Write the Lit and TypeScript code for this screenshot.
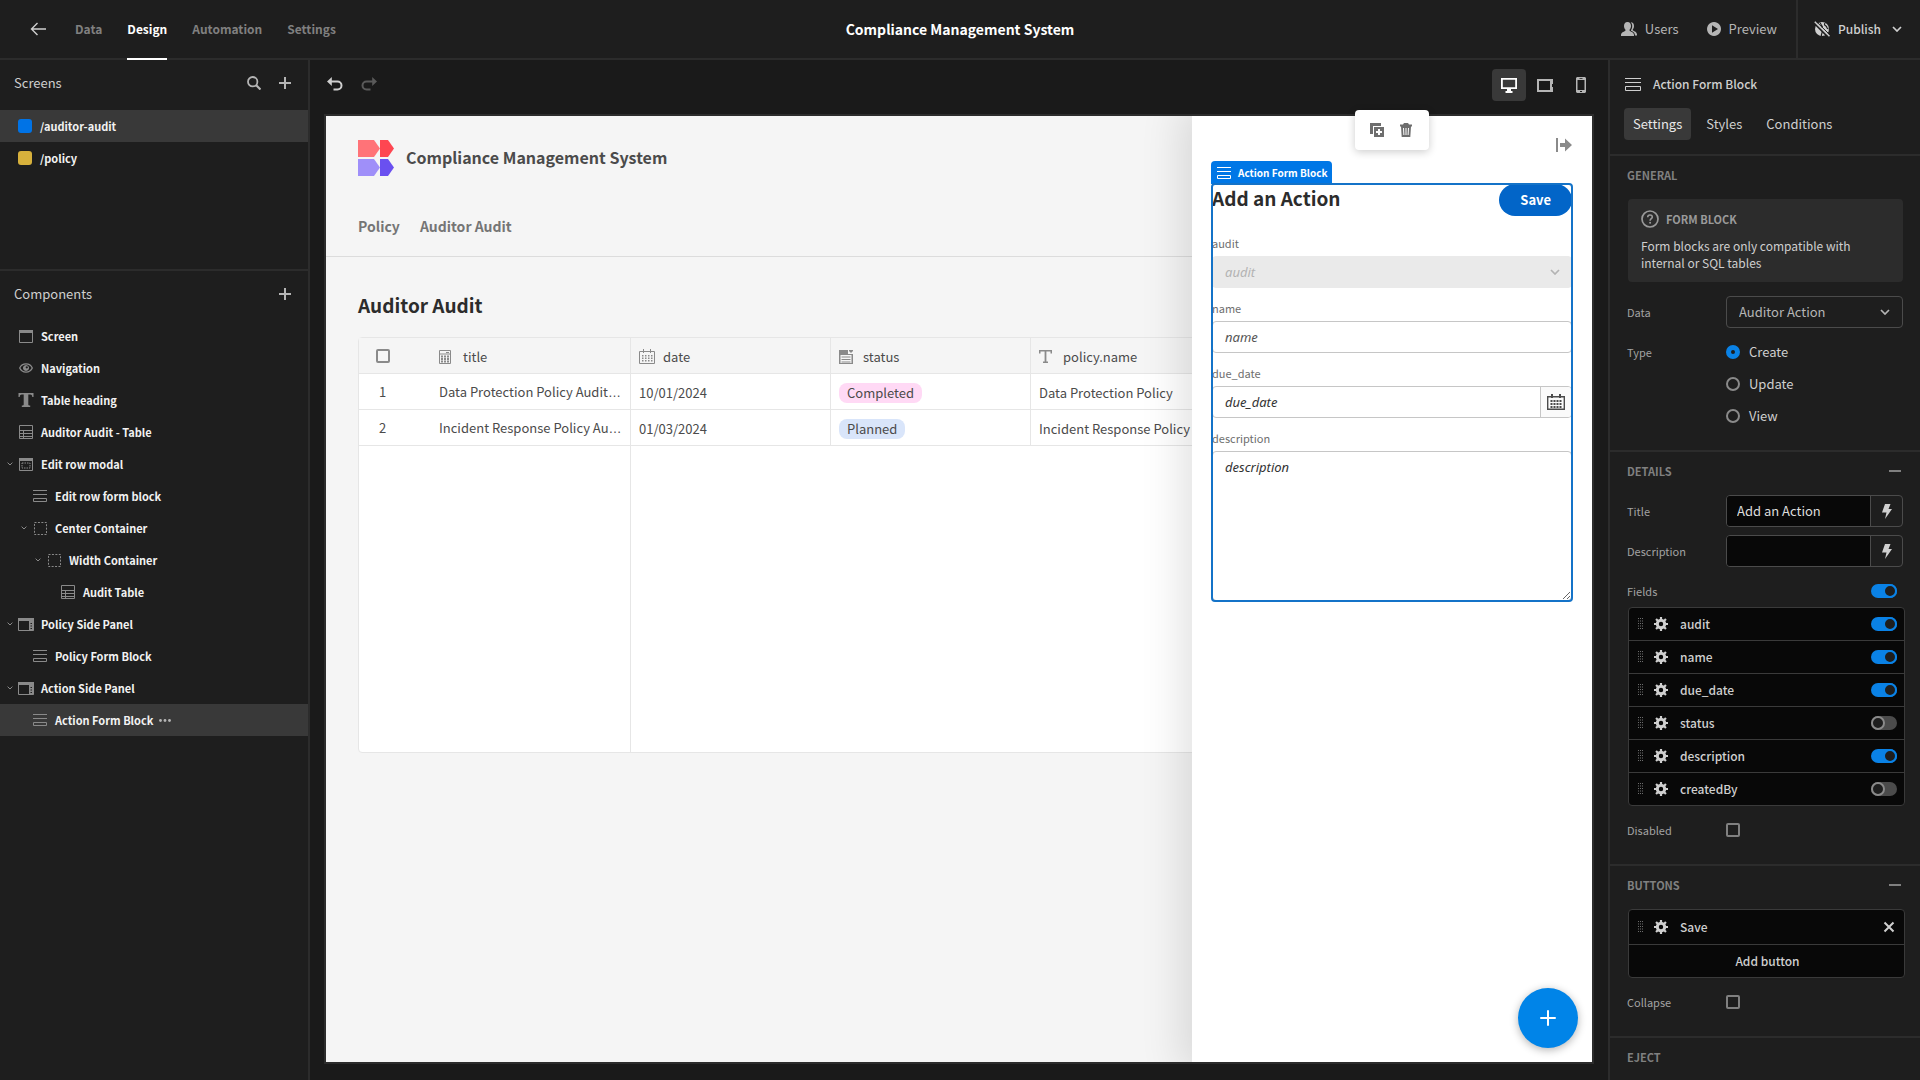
import { LitElement, html, svg, css, nothing } from "lit";
import { customElement } from "lit/decorators.js";
import { classMap } from "lit/directives/class-map.js";

const line = (d: string, w: number | string = 1) =>
  svg`<path d=${d} fill="none" stroke="currentColor" stroke-width=${w}></path>`;
const fill = (d: string) => svg`<path d=${d} fill="currentColor" fill-rule="evenodd"></path>`;

const dots = (cols: number[], rows: number[], s: number) =>
  cols.map((x) => rows.map((y) => svg`<rect x=${x} y=${y} width=${s} height=${s} fill="currentColor"></rect>`));

const ICONS: Record<string, [number, number, unknown]> = {
  back: [16, 14, line("M16 7H1.5M7.5 1L1.5 7l6 6", 1.4)],
  search: [14, 14, svg`<circle cx="5.7" cy="5.7" r="4.7" fill="none" stroke="currentColor" stroke-width="1.8"></circle>${line("M9 9l4.5 4.5", 2.2)}`],
  plus: [12, 12, line("M6 0v12M0 6h12", 2)],
  minus: [12, 2, line("M0 1h12", 2)],
  cross: [12, 12, line("M1.5 1.5l9 9M10.5 1.5l-9 9", 2)],
  chevron: [10, 6, line("M1 1l4 4 4-4", 1.7)],
  chevronSmall: [6, 4, line("M0.6 0.6L3 3l2.400-2.400", 1)],
  undo: [16, 14, svg`${line("M4 4.500h6.500a4 4 0 0 1 0 8H6.500", 2)}${fill("M0 4.500L4.800 0v9z")}`],
  redo: [16, 14, svg`${line("M12 4.500H5.500a4 4 0 0 0 0 8h4", 2)}${fill("M16 4.500L11.200 0v9z")}`],
  screen: [14, 13, svg`${line("M.5 .5h13v12h-13z")}${fill("M0 0h14v3H0z")}`],
  eye: [14, 10, svg`${line("M.7 5C3.200-.4 10.800-.4 13.300 5C10.800 10.400 3.200 10.400 .7 5z", 1.3)}${fill("M7 2a3 3 0 1 0 .01 0zM7.800 3.200a1.100 1.100 0 1 1-.01 0z")}`],
  text: [16, 14, fill("M.5 0h15v4h-1.200c-.2-1.600-.8-2.400-2.200-2.400H10.300v9.800c0 .8.500 1 1.900 1.100V14H3.800v-1.500c1.400-.1 1.900-.3 1.900-1.100V1.600H3.900C2.500 1.600 1.900 2.400 1.700 4H.5z")],
  table: [14, 14, line("M.5 .5h13v13H.5zM0 5.500h14M0 8.500h14M0 11.500h14M4.500 5.500V14")],
  modal: [14, 13, svg`${line("M.5 .5h13v12h-13z")}${fill("M0 0h14v3H0z")}<rect x="3" y="5" width="8" height="5" fill="none" stroke="currentColor" stroke-dasharray="1.500 1"></rect>`],
  form: [14, 12, line("M0 .5h14M0 4.500h14M.5 8.500h13v3H.5z")],
  formLarge: [16, 13, line("M0 .5h16M0 4.500h16M.5 8.500h15v4H.5z", 1)],
  box: [13, 13, svg`<rect x=".5" y=".5" width="12" height="12" fill="none" stroke="currentColor" stroke-dasharray="2 1.430"></rect>`],
  panel: [16, 13, svg`${line("M.5 .5h15v12H.5z")}${fill("M0 0h16v3H0zM11 3h4.500v9.500H11zM12.500 5v1H14V5zM12.500 7.500v1H14v-1zM12.500 10v1H14v-1z")}`],
  more: [12, 3, svg`<circle cx="1.500" cy="1.500" r="1.400" fill="currentColor"></circle><circle cx="6" cy="1.500" r="1.400" fill="currentColor"></circle><circle cx="10.500" cy="1.500" r="1.400" fill="currentColor"></circle>`],
  users: [16, 14, svg`${fill("M6.500 0C9 0 10 1.800 10 4c0 1.600-.6 2.800-1.400 3.600v1.200C9 9.500 13 10.200 13 13v1H0v-1c0-2.800 4-3.500 4.400-4.200V7.600C3.600 6.800 3 5.600 3 4c0-2.200 1-4 3.500-4z")}${fill("M9.700 .3C12 .3 13 1.900 13 4c0 1.500-.5 2.600-1.200 3.300v1C12.200 9 16 9.800 16 12.500v1h-2c-.1-2.600-1.700-3.700-4-4.700v-.8c.8-1 1.200-2.300 1.200-4 0-1.500-.5-2.800-1.500-3.700z")}`],
  play: [14, 14, fill("M7 0a7 7 0 1 0 .01 0zM5 3.300L11 7l-6 3.700z")],
  globe: [16, 16, svg`<circle cx="8" cy="8" r="7" fill="currentColor"></circle>
    <path d="M5.500 1.500c2 1 1 2.500 2.500 3.500s-2 2-1 3.500 2 1 1 3.500-.5 1.500-.5 3M11 2c-1 1.500-.5 2 1 3s0 2.500 2.500 3" fill="none" stroke="#1e1e1e" stroke-width="1.200"></path>
    <path d="M0 2L14 16" stroke="#1e1e1e" stroke-width="1.800"></path><path d="M.8 .8L15.500 15.300" stroke="currentColor" stroke-width="1.600"></path>
    <path d="M2 .2L16 14" stroke="#1e1e1e" stroke-width="1"></path>`],
  monitor: [16, 15, fill("M0 0h16v11h-6v2h1.500v2h-7v-2H6v-2H0zM1.800 1.800v7.400h12.400V1.800z")],
  tablet: [16, 13, fill("M0 0h16v5h-1v3h1v5H0zM2 2v9h11V2z")],
  phone: [10, 16, fill("M1 0h8l1 1v14l-1 1H1l-1-1V1zM1.500 3v10h7V3zM3.500 1v.8h3V1zM4 14v1h2v-1z")],
  duplicate: [14, 14, svg`${fill("M0 0h11v3H3v8H0z")}${fill("M4 4h10v10H4zM8 6v2H6v2h2v2h2v-2h2V8h-2V6z")}`],
  trash: [12, 14, fill("M4 0h4l1 1.500h3v2h-1L10.300 14H1.700L1 3.500H0v-2h3zM3 5l.4 7h1L4 5zM5.500 5v7h1V5zM8 5l-.4 7h1L9 5z")],
  dismiss: [16, 14, fill("M0 0h2v14H0zM4 5h5V.5L16 7l-7 6.500V9H4z")],
  number: [12, 14, svg`${line("M.5 .5h11v13H.5zM.5 4h11", 1)}${dots([2, 5, 8], [5.500, 8, 10.500], 2)}${fill("M7 2h3v1H7z")}`],
  calendar: [16, 15, svg`${line("M.5 2.500h15v12H.5zM4.500 0v4M11.500 0v4")}${dots([3, 6, 9, 12], [6, 8.5, 11], 1.5)}`],
  calendarDark: [18, 16, svg`${line("M.7 2.700h16.600v12.600H.7z", 1.400)}${line("M5 0v4M13 0v4", 2)}${dots([3.5, 6.5, 9.5, 12.500], [6, 9, 12], 2)}`],
  options: [14, 14, svg`${line("M.5 4.500h13v9H.5zM2.500 7h9M2.500 9.500h9M2.500 12h9", 1)}${fill("M0 0h9v4H0zM10 0h4v1l-2 2-2-2zM0 4h1.500v10H0zM12.500 4H14v10h-1.500z")}`],
  type: [13, 13, fill("M0 0h13v3.500h-1.500V1.500H7.400v10H9V13H4v-1.500h1.600v-10H1.500v2H0z")],
  help: [18, 18, svg`<circle cx="9" cy="9" r="8" fill="none" stroke="currentColor" stroke-width="1.700"></circle>${line("M6.700 7.200c0-2.900 4.600-2.900 4.600-.2 0 1.700-2.200 1.700-2.200 3.700", 1.600)}<circle cx="9.100" cy="12.800" r="1" fill="currentColor"></circle>`],
  bolt: [10, 15, fill("M3 0h5.500L6.500 5H10L3 15l1.500-6.500H0z")],
  gear: [14, 14, svg`<circle cx="7" cy="7" r="3.700" fill="none" stroke="currentColor" stroke-width="3"></circle>${line("M7 0v3M7 11v3M0 7h3M11 7h3M2.050 2.050L4 4M10 10l1.950 1.950M11.950 2.050L10 4M4 10l-1.950 1.950", 2.200)}`],
  grip: [5, 12, svg`${dots([0, 2, 4], [0, 2.500, 5, 7.500, 10], 1)}`],
};

const icon = (name: string, cls = "") => {
  const [w, h, body] = ICONS[name];
  return html`<svg class="icon ${cls}" width=${w} height=${h} viewBox="0 0 ${w} ${h}" aria-hidden="true">${body}</svg>`;
};

const base = css`
  :host {
    --font: "Noto Sans CJK SC", "Liberation Sans", sans-serif;
    --small: 11px;
    --strong: 12px;
    --body: 13px;
    --panel: #1e1e1e;
    --line: #2c2c2c;
    --active: #393939;
    --muted: #808080;
    --label: #a3a3a3;
    --ink: #cfcfcf;
    font-family: var(--font);
    font-size: var(--body);
    line-height: 16px;
    color: var(--ink);
    box-sizing: border-box;
  }
  *, *::before, *::after { box-sizing: border-box; }
  button, input, select, textarea { font: inherit; color: inherit; margin: 0; }
  button { background: none; border: 0; padding: 0; cursor: pointer; display: inline-flex; align-items: center; }
  a { color: inherit; text-decoration: none; }
  h1, h2, h3, p, ul { margin: 0; padding: 0; font-size: inherit; font-weight: inherit; }
  ul { list-style: none; }
  .icon { display: block; flex: none; }
`;

@customElement("top-bar")
class TopBar extends LitElement {
  static styles = [base, css`
    :host { display: grid; grid-template-columns: 1fr auto 1fr; height: 60px; background: var(--panel); border-bottom: 2px solid var(--line); }
    .left { display: flex; align-items: center; padding-left: 30px; }
    .tabs { display: flex; align-self: stretch; gap: 25px; margin: 0 0 -2px 29px; }
    .tab { display: flex; align-items: center; font-size: var(--strong); font-weight: 600; color: var(--muted); border-bottom: 2px solid transparent; }
    .tab.on { color: #fff; border-color: #fff; }
    .title { align-self: center; font-size: 14px; font-weight: 600; color: #fff; }
    .right { display: flex; justify-content: flex-end; align-items: center; }
    .action { gap: 8px; margin-right: 28px; color: #b5b5b5; }
    .action + .action { margin-right: 19px; }
    .publish { align-self: stretch; gap: 8px; border-left: 2px solid var(--line); padding: 0 18px 0 16px; font-size: var(--strong); font-weight: 500; }
    .publish .chev { margin-left: 3px; }
  `];
  render() {
    return html`
      <div class="left">
        <button aria-label="Back">${icon("back")}</button>
        <nav class="tabs">
          ${["Data", "Design", "Automation", "Settings"].map((t) => html`<a href="#" class=${classMap({ tab: true, on: t === "Design" })}>${t}</a>`)}
        </nav>
      </div>
      <h1 class="title">Compliance Management System</h1>
      <div class="right">
        <button class="action">${icon("users")}Users</button>
        <button class="action">${icon("play")}Preview</button>
        <button class="publish">${icon("globe")}Publish${icon("chevron", "chev")}</button>
      </div>`;
  }
}

interface TreeRow { name: string; icon: string; level: number; open?: boolean; on?: boolean; }
const TREE: TreeRow[] = [
  { name: "Screen", icon: "screen", level: 0 },
  { name: "Navigation", icon: "eye", level: 0 },
  { name: "Table heading", icon: "text", level: 0 },
  { name: "Auditor Audit - Table", icon: "table", level: 0 },
  { name: "Edit row modal", icon: "modal", level: 0, open: true },
  { name: "Edit row form block", icon: "form", level: 1 },
  { name: "Center Container", icon: "box", level: 1, open: true },
  { name: "Width Container", icon: "box", level: 2, open: true },
  { name: "Audit Table", icon: "table", level: 3 },
  { name: "Policy Side Panel", icon: "panel", level: 0, open: true },
  { name: "Policy Form Block", icon: "form", level: 1 },
  { name: "Action Side Panel", icon: "panel", level: 0, open: true },
  { name: "Action Form Block", icon: "form", level: 1, on: true },
];

@customElement("screen-tree")
class ScreenTree extends LitElement {
  static styles = [base, css`
    :host { display: flex; flex-direction: column; background: var(--panel); border-right: 2px solid var(--line); }
    .head { display: flex; align-items: center; gap: 18px; height: 46px; margin-bottom: 3px; padding: 0 17px 0 14px; }
    .head h2 { flex: 1; }
    .head button { color: #b5b5b5; }
    .screens { height: 211px; border-bottom: 2px solid var(--line); }
    .screens .head { margin-bottom: 4px; }
    .row { display: flex; align-items: center; height: 32px; font-size: var(--small); font-weight: 700; color: #f2f2f2; }
    .row.on { background: var(--active); }
    .row button { flex: 1; height: 100%; text-align: left; }
    .swatch { width: 14px; height: 14px; border-radius: 3px; margin: 0 8px 0 18px; background: #0073e6; }
    .swatch.gold { background: #d7b13c; }
    .indent { flex: none; width: calc(var(--level) * 14px); }
    .twist { width: 6px; margin: 0 4px 0 7px; color: #8a8a8a; }
    .kind { display: flex; justify-content: center; width: 18px; margin-right: 6px; color: #8a8a8a; }
    .dots { margin-left: 6px; color: #b5b5b5; }
  `];
  render() {
    return html`
      <section class="screens">
        <div class="head"><h2>Screens</h2><button aria-label="Search">${icon("search")}</button><button aria-label="Add screen">${icon("plus")}</button></div>
        <ul>
          <li class="row on"><button><span class="swatch"></span>/auditor-audit</button></li>
          <li class="row"><button><span class="swatch gold"></span>/policy</button></li>
        </ul>
      </section>
      <section>
        <div class="head"><h2>Components</h2><button aria-label="Add component">${icon("plus")}</button></div>
        <ul>
          ${TREE.map((r) => html`<li class=${classMap({ row: true, on: !!r.on })}>
            <button>
              <span class="indent" style="--level:${r.level}"></span>
              <span class="twist">${r.open ? icon("chevronSmall") : nothing}</span>
              <span class="kind">${icon(r.icon)}</span>${r.name}
              ${r.on ? icon("more", "dots") : nothing}
            </button></li>`)}
        </ul>
      </section>`;
  }
}

@customElement("design-canvas")
class DesignCanvas extends LitElement {
  static styles = [base, css`
    :host { display: flex; flex-direction: column; min-width: 0; padding: 0 14px 16px; background: #1a1a1a; }
    .bar { display: flex; align-items: center; justify-content: space-between; height: 50px; margin-bottom: 4px; padding-left: 3px; }
    .history, .devices { display: flex; align-items: center; }
    .history { gap: 18px; padding-bottom: 2px; }
    .history .off { color: #5a5a5a; }
    .devices { gap: 2px; margin-right: -4px; }
    .device { justify-content: center; width: 34px; height: 32px; border-radius: 4px; color: #b5b5b5; }
    .device.on { background: var(--active); color: #fff; }
    .frame { position: relative; flex: 1; min-height: 0; border: 2px solid var(--line); background: #f5f5f5; color: #4b4b4b; }
    .site { display: flex; flex-direction: column; height: 100%; overflow: hidden; }
    .brand { display: flex; align-items: center; gap: 12px; padding: 24px 32px 0; }
    .brand h2 { padding-bottom: 2px; font-size: 16px; line-height: 24px; font-weight: 600; }
    .links { display: flex; gap: 20px; padding: 37px 32px 17px; border-bottom: 1px solid #dcdcdc; font-size: 14px; line-height: 26px; font-weight: 600; color: #757575; }
    .heading { padding: 32px 32px 16px; font-size: 19px; line-height: 32px; font-weight: 600; color: #2c2c2c; }
    .grid { display: flex; flex-direction: column; height: 416px; margin: 0 32px; border: 1px solid #e6e6e6; border-radius: 4px; background: #fff; }
    table { width: 100%; border-collapse: separate; border-spacing: 0; table-layout: fixed; }
    .c-check { width: 72px; } .c-title { width: 200px; } .c-col { width: 200px; }
    th, td { height: 36px; padding: 2px 8px 0; border-bottom: 1px solid #e6e6e6; border-right: 1px solid #e6e6e6; text-align: left; font-weight: 400; }
    th { background: #f5f5f5; }
    td { white-space: nowrap; overflow: hidden; }
    .first { border-right: 0; padding: 0 17px; text-align: left; }
    td.first { padding-left: 20px; }
    .first input { appearance: none; display: block; width: 14px; height: 14px; border: 2px solid #8a8a8a; border-radius: 2px; }
    .th { display: flex; align-items: center; gap: 10px; }
    .th .icon { color: #8a8a8a; }
    .kind { display: flex; justify-content: flex-start; width: 14px; }
    .more { font-family: "Liberation Sans", sans-serif; }
    .rest { flex: 1; width: 272px; border-right: 1px solid #e6e6e6; }
    .pill { display: inline-block; line-height: 20px; padding: 0 8px; border-radius: 8px; background: #ffd9f5; }
    .pill.plan { background: #d9e5fa; }
    .drawer { position: absolute; top: 0; right: 0; bottom: 0; width: 400px; padding: 22px 20px; background: #fff; box-shadow: 0 0 40px 10px rgba(0, 0, 0, 0.12); clip-path: inset(0 0 0 -60px); }
    .dismiss { display: flex; margin-left: auto; color: #8a8a8a; }
    .block { position: relative; margin-top: 32px; }
    .block::after { content: ""; position: absolute; inset: -1px; border: 2px solid #1473c8; border-radius: 4px; pointer-events: none; }
    .tag { position: absolute; left: -1px; bottom: 100%; display: flex; align-items: center; gap: 7px; height: 23px; padding: 0 5px 0 6px; border-radius: 4px 4px 0 0; background: #0077e6; color: #fff; font-size: 10px; font-weight: 700; white-space: nowrap; }
    .top { display: flex; justify-content: space-between; height: 32px; margin-bottom: 15px; }
    .top h3 { font-size: 19px; line-height: 28px; font-weight: 600; color: #2c2c2c; }
    .save { height: 32px; padding: 0 21px; border-radius: 16px; background: #0265c8; color: #fff; font-weight: 700; }
    .fields { display: flex; flex-direction: column; gap: 8px; }
    .field label { display: block; font-size: var(--small); line-height: 25px; color: #6e6e6e; }
    .ctl { display: flex; align-items: center; height: 32px; border: 1px solid #c6c6c6; border-radius: 4px; background: #fff; overflow: hidden; }
    .ctl.off { background: #eaeaea; border-color: #eaeaea; color: #b3b3b3; padding-right: 11px; }
    .ctl input, .ctl select, textarea { flex: 1; min-width: 0; padding: 0 12px; border: 0; background: none; appearance: none; outline: 0; font-family: "Noto Sans", "Noto Sans CJK SC", sans-serif; font-size: 13px; font-style: italic; opacity: 1; }
    .ctl input::placeholder { color: #555; }
    .ctl button { justify-content: center; width: 31px; height: 100%; border-left: 1px solid #c6c6c6; background: #fafafa; }
    .ctl.dark input::placeholder, textarea::placeholder { color: #333; }
    textarea { display: block; width: 100%; height: 150px; padding: 7px 12px; border: 1px solid #c6c6c6; border-radius: 4px; }
    .float { position: absolute; top: -6px; right: 163px; display: flex; gap: 16px; padding: 13px 17px 13px 15px; border-radius: 4px; background: #fff; color: #6e6e6e; box-shadow: 0 2px 8px rgba(0, 0, 0, 0.2); }
    .fab { position: absolute; right: 14px; bottom: 14px; justify-content: center; width: 60px; height: 60px; border-radius: 50%; background: #0084e8; color: #fff; box-shadow: 0 2px 8px rgba(0, 0, 0, 0.3); }
  `];
  render() {
    const col = (name: string, label: string) => html`<th><span class="th"><span class="kind">${icon(name)}</span>${label}</span></th>`;
    const row = (n: number, title: string, date: string, status: string, policy: string) => html`<tr>
      <td class="first">${n}</td><td>${title}<span class="more">…</span></td><td>${date}</td>
      <td><span class=${classMap({ pill: true, plan: status === "Planned" })}>${status}</span></td><td>${policy}</td><td></td></tr>`;
    return html`
      <div class="bar">
        <div class="history"><button aria-label="Undo">${icon("undo")}</button><button class="off" aria-label="Redo">${icon("redo")}</button></div>
        <div class="devices">
          <button class="device on" aria-label="Desktop">${icon("monitor")}</button>
          <button class="device" aria-label="Tablet">${icon("tablet")}</button>
          <button class="device" aria-label="Mobile">${icon("phone")}</button>
        </div>
      </div>
      <div class="frame">
        <div class="site">
          <div class="brand">
            <svg width="36" height="36" viewBox="0 0 36 36" aria-hidden="true">
              <path d="M0 0h16l6 8.500-6 8.500H0z" fill="#ff7378"></path><path d="M22 0h8l6 8.500-6 8.500h-8z" fill="#fe4651"></path>
              <path d="M0 19h16l6 8.500-6 8.500H0z" fill="#9f8ff9"></path><path d="M22 19h8l6 8.500-6 8.500h-8z" fill="#6a50f0"></path>
            </svg>
            <h2>Compliance Management System</h2>
          </div>
          <nav class="links"><a href="#">Policy</a><a href="#">Auditor Audit</a></nav>
          <h3 class="heading">Auditor Audit</h3>
          <div class="grid">
            <table>
              <colgroup><col class="c-check"><col class="c-title"><col class="c-col"><col class="c-col"><col class="c-col"><col></colgroup>
              <thead><tr>
                <th class="first"><input type="checkbox" aria-label="Select all rows"></th>
                ${col("number", "title")}${col("calendar", "date")}${col("options", "status")}${col("type", "policy.name")}<th></th>
              </tr></thead>
              <tbody>
                ${row(1, "Data Protection Policy Audit", "10/01/2024", "Completed", "Data Protection Policy")}
                ${row(2, "Incident Response Policy Au", "01/03/2024", "Planned", "Incident Response Policy")}
              </tbody>
            </table>
            <div class="rest"></div>
          </div>
        </div>
        <aside class="drawer">
          <button class="dismiss" aria-label="Close panel">${icon("dismiss")}</button>
          <div class="block">
            <div class="tag">${icon("form")}Action Form Block</div>
            <div class="top"><h3>Add an Action</h3><button class="save">Save</button></div>
            <div class="fields">
              <div class="field"><label for="audit">audit</label>
                <div class="ctl off"><select id="audit" disabled><option>audit</option></select>${icon("chevron")}</div></div>
              <div class="field"><label for="name">name</label>
                <div class="ctl"><input id="name" placeholder="name"></div></div>
              <div class="field"><label for="due">due_date</label>
                <div class="ctl dark"><input id="due" placeholder="due_date"><button aria-label="Pick a date">${icon("calendarDark")}</button></div></div>
              <div class="field"><label for="desc">description</label>
                <textarea id="desc" placeholder="description"></textarea></div>
            </div>
          </div>
        </aside>
        <div class="float"><button aria-label="Duplicate">${icon("duplicate")}</button><button aria-label="Delete">${icon("trash")}</button></div>
        <button class="fab" aria-label="Add component">
          <svg width="16" height="16" viewBox="0 0 16 16" aria-hidden="true"><path d="M8 1v14M1 8h14" stroke="currentColor" stroke-width="2" stroke-linecap="round"></path></svg>
        </button>
      </div>`;
  }
}

const FIELDS: [string, boolean][] = [
  ["audit", true], ["name", true], ["due_date", true], ["status", false], ["description", true], ["createdBy", false],
];

@customElement("settings-panel")
class SettingsPanel extends LitElement {
  static styles = [base, css`
    :host { display: block; overflow: hidden; background: var(--panel); border-left: 2px solid var(--line); }
    .head { height: 96px; padding: 0 14px; border-bottom: 2px solid var(--line); }
    .name { display: flex; align-items: center; gap: 12px; height: 48px; padding-left: 1px; font-size: var(--strong); font-weight: 500; }
    .tabs { display: flex; gap: 6px; }
    .tab { height: 32px; padding: 0 9px; border-radius: 4px; }
    .tab.on { background: var(--active); color: #e8e8e8; }
    .section { padding: 0 17px 18px; border-bottom: 2px solid var(--line); }
    .title { display: flex; align-items: center; justify-content: space-between; height: 38px; padding-right: 2px; margin-bottom: 5px; font-size: var(--small); font-weight: 600; color: var(--muted); }
    .info { display: grid; gap: 9px; margin: 0 0 14px 1px; padding: 11px 13px; border-radius: 4px; background: #2c2c2c; line-height: 17px; font-size: 12px; }
    .info h3 { display: flex; align-items: center; gap: 7px; font-size: var(--small); line-height: 18px; font-weight: 600; color: #9a9a9a; }
    .rows { display: grid; gap: 8px; }
    .row { display: grid; grid-template-columns: 99px 1fr; min-height: 32px; align-items: center; }
    .lab { font-size: var(--small); line-height: 32px; align-self: start; color: var(--label); }
    .pick { display: flex; align-items: center; height: 32px; padding-right: 12px; border: 1px solid #4b4b4b; border-radius: 4px; color: #b5b5b5; }
    .pick select { appearance: none; flex: 1; padding: 0 12px; border: 0; background: none; height: 100%; outline: 0; }
    .radio { display: flex; align-items: center; gap: 9px; height: 32px; }
    .radio input { appearance: none; width: 14px; height: 14px; border: 2px solid #8a8a8a; border-radius: 50%; }
    .radio input:checked { border: 5px solid #0a82e6; }
    .combo { display: flex; height: 32px; border: 1px solid #4b4b4b; border-radius: 4px; overflow: hidden; }
    .combo input { flex: 1; min-width: 0; padding: 0 10px; border: 0; background: #080808; outline: 0; color: #dcdcdc; }
    .combo button { justify-content: center; width: 32px; border-left: 1px solid #4b4b4b; }
    .line { display: flex; align-items: center; justify-content: space-between; height: 32px; padding-right: 6px; }
    .list { margin: 0 -2px 8px 1px; border: 1px solid #3a3a3a; border-radius: 4px; background: #080808; overflow: hidden; }
    .item { display: flex; align-items: center; height: 33px; padding: 0 7px 0 9px; border-bottom: 1px solid #3a3a3a; font-size: var(--strong); font-weight: 500; }
    .item:last-child { height: 32px; border-bottom: 0; }
    .item.tall { height: 35px; padding-right: 9px; }
    .item .grip { margin-right: 11px; color: #6e6e6e; }
    .item .name-text { flex: 1; margin-left: 12px; }
    .item .add { flex: 1; justify-content: center; }
    .switch { appearance: none; display: flex; align-items: center; width: 26px; height: 14px; padding: 0; border-radius: 7px; background: #4b4b4b; }
    .switch::before { content: ""; width: 14px; height: 14px; border: 2px solid #8a8a8a; border-radius: 50%; background: #1e1e1e; }
    .switch:checked { background: #0a82e6; }
    .switch:checked::before { margin-left: auto; border-color: #0a82e6; }
    .box { appearance: none; width: 14px; height: 14px; border: 2px solid #808080; border-radius: 2px; }
  `];
  render() {
    return html`
      <div class="head">
        <h2 class="name">${icon("formLarge")}Action Form Block</h2>
        <div class="tabs"><button class="tab on">Settings</button><button class="tab">Styles</button><button class="tab">Conditions</button></div>
      </div>
      <section class="section">
        <h3 class="title">GENERAL</h3>
        <div class="info"><h3>${icon("help")}FORM BLOCK</h3><p>Form blocks are only compatible with internal or SQL tables</p></div>
        <div class="rows">
          <div class="row"><label class="lab" for="data">Data</label>
            <div class="pick"><select id="data"><option>Auditor Action</option></select>${icon("chevron")}</div></div>
          <div class="row" role="radiogroup" aria-labelledby="type"><span class="lab" id="type">Type</span>
            <div>${["Create", "Update", "View"].map((t) => html`<label class="radio"><input type="radio" name="type" ?checked=${t === "Create"}>${t}</label>`)}</div></div>
        </div>
      </section>
      <section class="section">
        <h3 class="title">DETAILS<button aria-label="Collapse details">${icon("minus")}</button></h3>
        <div class="rows">
          <div class="row"><label class="lab" for="title">Title</label>
            <div class="combo"><input id="title" value="Add an Action"><button aria-label="Bind title">${icon("bolt")}</button></div></div>
          <div class="row"><label class="lab" for="description">Description</label>
            <div class="combo"><input id="description"><button aria-label="Bind description">${icon("bolt")}</button></div></div>
          <div class="line"><label class="lab" for="fields">Fields</label><input class="switch" type="checkbox" id="fields" checked></div>
        </div>
        <ul class="list">
          ${FIELDS.map(([name, on]) => html`<li class="item">${icon("grip", "grip")}<button aria-label="Edit ${name}">${icon("gear")}</button>
            <label class="name-text" for="f-${name}">${name}</label><input class="switch" type="checkbox" id="f-${name}" ?checked=${on}></li>`)}
        </ul>
        <div class="row"><label class="lab" for="disabled">Disabled</label><input class="box" type="checkbox" id="disabled"></div>
      </section>
      <section class="section">
        <h3 class="title">BUTTONS<button aria-label="Collapse buttons">${icon("minus")}</button></h3>
        <ul class="list">
          <li class="item tall">${icon("grip", "grip")}<button aria-label="Edit Save">${icon("gear")}</button><span class="name-text">Save</span><button aria-label="Remove Save">${icon("cross")}</button></li>
          <li class="item"><button class="add">Add button</button></li>
        </ul>
        <div class="row"><label class="lab" for="collapse">Collapse</label><input class="box" type="checkbox" id="collapse"></div>
      </section>
      <section class="section"><h3 class="title">EJECT</h3></section>`;
  }
}

@customElement("app-root")
class AppRoot extends LitElement {
  static styles = css`
    :host { display: grid; grid-template: auto minmax(0, 1fr) / 310px minmax(0, 1fr) 312px; height: 100vh; background: #1a1a1a; overflow: hidden; }
    top-bar { grid-column: 1 / -1; }
  `;
  render() {
    return html`<top-bar></top-bar><screen-tree></screen-tree><design-canvas></design-canvas><settings-panel></settings-panel>`;
  }
}
